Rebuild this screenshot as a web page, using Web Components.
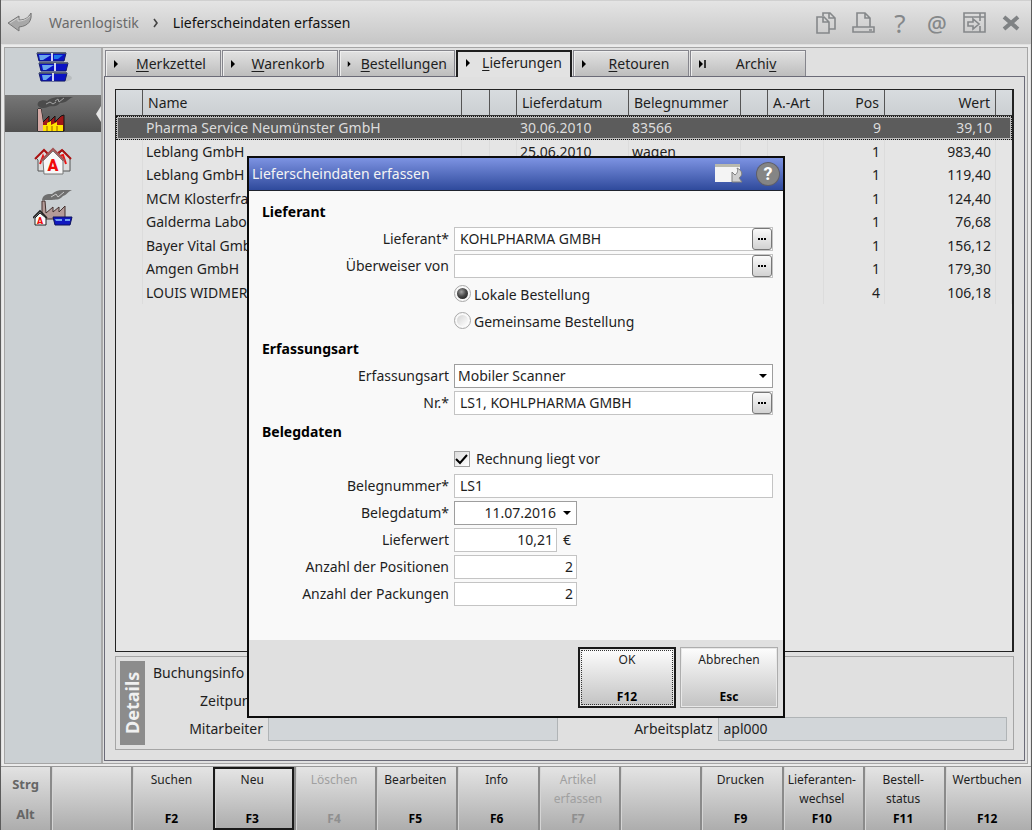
<!DOCTYPE html>
<html lang="de">
<head>
<meta charset="utf-8">
<title>Lieferscheindaten erfassen</title>
<style>
    html, body { margin: 0; height: 100%; }
    body {
        font: 14px/20px "Noto Sans", "Open Sans", sans-serif;
        color: #1e1e1e;
        background: #e0e0e0;
    }
</style>
</head>
<body>
<app-window>
    <title-bar slot="header" area="Warenlogistik" page="Lieferscheindaten erfassen"></title-bar>
    <side-nav slot="nav"></side-nav>
    <tab-strip slot="tabs">
        <tab-item before="" key="M" after="erkzettel"></tab-item>
        <tab-item before="" key="W" after="arenkorb"></tab-item>
        <tab-item before="" key="B" after="estellungen"></tab-item>
        <tab-item before="" key="L" after="ieferungen" active></tab-item>
        <tab-item before="" key="R" after="etouren"></tab-item>
        <tab-item before="Archi" key="v" after="" last></tab-item>
    </tab-strip>
    <delivery-table></delivery-table>
    <details-panel></details-panel>
    <function-bar slot="footer">
        <function-key></function-key>
        <function-key key="F2">Suchen</function-key>
        <function-key key="F3" current>Neu</function-key>
        <function-key key="F4" disabled>Löschen</function-key>
        <function-key key="F5">Bearbeiten</function-key>
        <function-key key="F6">Info</function-key>
        <function-key key="F7" disabled>Artikel<br>erfassen</function-key>
        <function-key></function-key>
        <function-key key="F9">Drucken</function-key>
        <function-key key="F10">Lieferanten-<br>wechsel</function-key>
        <function-key key="F11">Bestell-<br>status</function-key>
        <function-key key="F12">Wertbuchen</function-key>
    </function-bar>
    <modal-dialog slot="dialog" caption="Lieferscheindaten erfassen">
        <form-section caption="Lieferant">
            <form-field label="Lieferant*" type="lookup" value="KOHLPHARMA GMBH"></form-field>
            <form-field label="Überweiser von" type="lookup" value=""></form-field>
            <radio-choice name="bestellung" options="Lokale Bestellung|Gemeinsame Bestellung"></radio-choice>
        </form-section>
        <form-section caption="Erfassungsart">
            <form-field label="Erfassungsart" type="select" value="Mobiler Scanner"></form-field>
            <form-field label="Nr.*" type="lookup" value="LS1, KOHLPHARMA GMBH"></form-field>
        </form-section>
        <form-section caption="Belegdaten">
            <form-field text="Rechnung liegt vor" type="check"></form-field>
            <form-field label="Belegnummer*" type="text" value="LS1"></form-field>
            <form-field label="Belegdatum*" type="date" value="11.07.2016"></form-field>
            <form-field label="Lieferwert" type="amount" value="10,21"></form-field>
            <form-field label="Anzahl der Positionen" type="number" value="2"></form-field>
            <form-field label="Anzahl der Packungen" type="number" value="2"></form-field>
        </form-section>
        <dialog-button slot="actions" key="F12" current>OK</dialog-button>
        <dialog-button slot="actions" key="Esc">Abbrechen</dialog-button>
    </modal-dialog>
</app-window>

<script>
// shared by every element
const base = `
    *, *::before, *::after { box-sizing: border-box; }
    button, input, select { font: inherit; color: inherit; margin: 0; }
    svg { display: block; }
`;

class BaseElement extends HTMLElement {
    constructor() {
        super();
        this.shadow = this.attachShadow({ mode: 'open' });
    }
    connectedCallback() {
        this.shadow.innerHTML = `<style>${base}${this.getStyle()}</style>${this.getTemplate()}`;
    }
    attr(name) {
        return this.getAttribute(name) || '';
    }
}

customElements.define('app-window', class extends BaseElement {
    getStyle() {
        return `
            :host {
                position: relative;
                display: flex;
                flex-direction: column;
                min-height: 100vh;
                border: solid #5c5c5c;
                border-width: 0 1px;
                box-sizing: border-box;
            }
            .middle {
                flex: 1;
                display: grid;
                grid-template-columns: 98px minmax(0, 1fr);
                gap: 1px;
                margin: 3px 3px 2px;
                border: 1px solid #a5a5a5;
                outline: 2px solid #ebebeb;
            }
            main { display: flex; flex-direction: column; padding: 2px 2px 2px 0; }
            .page {
                flex: 1;
                display: flex;
                flex-direction: column;
                gap: 4px;
                padding: 12px 10px 10px;
                border: 1px solid #6b6b78;
                background: #e0e0e0;
            }
            ::slotted(delivery-table) { flex: 1; }
        `;
    }
    getTemplate() {
        return `
            <slot name="header"></slot>
            <div class="middle">
                <slot name="nav"></slot>
                <main>
                    <slot name="tabs"></slot>
                    <div class="page"><slot></slot></div>
                </main>
            </div>
            <slot name="footer"></slot>
            <slot name="dialog"></slot>
        `;
    }
});

customElements.define('title-bar', class extends BaseElement {
    getStyle() {
        return `
            :host {
                display: flex;
                align-items: center;
                height: 44px;
                padding: 0 8px 0 6px;
                background: linear-gradient(#e4e4e4, #c6c6c6);
                border-top: 1px solid #d0d0d0;
                box-sizing: border-box;
            }
            nav { display: flex; align-items: center; flex: 1; }
            a { margin-left: 16px; color: #6a6a6a; text-decoration: none; }
            .chevron { margin-left: 14px; }
            strong { margin-left: 13px; font-weight: normal; color: #111; }
            .tools { display: flex; align-items: center; gap: 13px; }
            button {
                display: flex;
                align-items: center;
                justify-content: center;
                width: 24px;
                height: 28px;
                padding: 0;
                border: 0;
                background: none;
                color: #85888a;
            }
            .back { width: 26px; }
            .help { font-size: 26px; }
            .mail { font-size: 22px; font-weight: 500; }
        `;
    }
    getTemplate() {
        return `
            <nav>
                <button class="back" aria-label="Zurück">
                    <svg width="26" height="22" viewBox="0 0 26 22">
                        <path d="M1 11 12 4v4c6 0 9-2 12-7 1 7-2 13-12 14v4z" fill="#a8a8a8" stroke="#777" />
                        <path d="M3 11 11 6v3c6 0 9-2 12-5" fill="none" stroke="#d0d0d0" />
                    </svg>
                </button>
                <a href="#">${this.attr('area')}</a>
                <svg class="chevron" width="7" height="12" viewBox="0 0 7 12"><path d="M1 2l3 4-3 4" fill="none" stroke="#444" stroke-width="1.6"/></svg>
                <strong>${this.attr('page')}</strong>
            </nav>
            <div class="tools">
                <button aria-label="Kopieren">
                    <svg width="20" height="22" viewBox="0 0 20 22" fill="none" stroke="#85888a" stroke-width="1.6">
                        <path d="M7 4V1h7l5 5v11h-6M13 1v5h6M1 5h7l5 5v11H1zM7 5v5h6"/>
                    </svg>
                </button>
                <button aria-label="Drucken">
                    <svg width="23" height="22" viewBox="0 0 23 22" fill="none" stroke="#85888a" stroke-width="1.6">
                        <path d="M5 15V1h8l5 5v9M13 1v5h5M1 15h21v5H1zM17 18h3"/>
                    </svg>
                </button>
                <button class="help" aria-label="Hilfe">?</button>
                <button class="mail" aria-label="Kontakt">@</button>
                <button aria-label="Fenster">
                    <svg width="23" height="21" viewBox="0 0 23 21" fill="none" stroke="#85888a" stroke-width="1.6">
                        <path d="M1 1h21v19H1zM1 5h21M17 1v8M17 14v6M5 10h5V7l6 5-6 5v-3H5z"/>
                    </svg>
                </button>
                <button aria-label="Schließen">
                    <svg width="18" height="16" viewBox="0 0 18 16"><path d="M2 2l14 12M16 2L2 14" stroke="#7f8284" stroke-width="4"/></svg>
                </button>
            </div>
        `;
    }
});

const icons = {
    crates: `
        <ellipse cx="29" cy="29" rx="10" ry="4" fill="#b9bdbf"/>
        <g fill="#0a12c4" stroke="#10186a" stroke-width="1">
            <path d="M4 4h29l-2 8H6zM6 14h29l-2 8H8zM6 24h28l-2 8H8z"/>
        </g>
        <path d="M6 6h12l-8 5H7zM9 16h12l-8 5h-3zM9 26h10l-6 5h-3z" fill="#6aa5ee"/>
        <path d="M21 6h9l-5 4h-4z" fill="#1f78e8"/>
        <path d="M4 4h29M6 14h29M6 24h28" stroke="#55606e" stroke-width="1.4"/>
        <path d="M19 4v8M22 14v8M20 24v8" stroke="#fff" stroke-width="1.6"/>`,
    factory: `
        <path d="M5 10c-2-5 5-7 9-5 5-5 14-4 26-4-5 2-6 6-13 6-4 5-9 2-12 4-4 2-8 1-10-1z" fill="#4b4b4b"/>
        <path d="M13 8l4-2 3 2 3-2M22 5l3-2 1 3 5-4" fill="none" stroke="#a5a5a5"/>
        <path d="M5 13h3l2 13 6-6v6l6-6v6l6-6 3-1v16H5z" fill="#a01717" stroke="#141414"/>
        <path d="M5 13h3l2 13v9H5z" fill="#d5a9a5"/>
        <path d="M10 29h4v-2l4-2v4l6-3v3h6v6H10z" fill="#ffe500"/>
        <path d="M14 30v5M19 30v5M24 30v5" stroke="#a05a00"/>`,
    houses: `
        <path d="M3 15l8-8 7 8v13H5V17z" fill="#ddd" stroke="#555"/>
        <path d="M22 15l8-8 7 8v13H23z" fill="#ddd" stroke="#555"/>
        <path d="M7 21l3-8 3 8M27 13l3-1 3 9" fill="none" stroke="#e11" stroke-width="2"/>
        <path d="M2 16l9-9 5 5M25 10l4-3 9 9" fill="none" stroke="#a11" stroke-width="2"/>
        <path d="M10 18L20 8l10 10v13H11z" fill="#f7f7f7" stroke="#777"/>
        <path d="M8 18L20 6l12 12" fill="none" stroke="#a35252" stroke-width="2"/>
        <text x="20" y="28" text-anchor="middle" font-family="Roboto, sans-serif" font-size="16" font-weight="900" fill="#f00a0a">A</text>`,
    combined: `
        <path d="M9 10c1-6 6-6 10-6 5-5 12-4 20-4-6 3-5 5-9 6-4 5-8 3-11 4z" fill="#6f6f6f"/>
        <path d="M18 7l5-3 2 3 6-5" fill="none" stroke="#ccc"/>
        <path d="M9 11h3l1 12 7-6v5l6-5v5l6-6v13H9z" fill="#b49b98" stroke="#44312f"/>
        <path d="M20 27h19l-2 8H22z" fill="#1018c0" stroke="#0c125c"/>
        <path d="M22 29h7v2h-6zM32 29h5v2h-5z" fill="#74a2ef"/>
        <path d="M2 28l5-5 6 5v7H2z" fill="#f8f8f8" stroke="#222"/>
        <path d="M0 28l7-7 7 7" fill="none" stroke="#222" stroke-width="1.6"/>
        <text x="7" y="34" text-anchor="middle" font-family="Roboto, sans-serif" font-size="9" font-weight="900" fill="#f00a0a">A</text>`
};

customElements.define('side-nav', class extends BaseElement {
    getStyle() {
        return `
            :host {
                display: flex;
                flex-direction: column;
                gap: 10px;
                background: #cbd0d3;
                border-right: 2px solid #a9a9a9;
            }
            button {
                display: flex;
                align-items: center;
                justify-content: center;
                height: 37px;
                padding: 0;
                border: 0;
                background: none;
            }
            button.active {
                position: relative;
                background: linear-gradient(#777, #505050);
            }
            button.active::after {
                content: "";
                position: absolute;
                top: 11px;
                right: 0;
                border: solid transparent;
                border-width: 8px 5px 8px 0;
                border-right-color: #e6e6e6;
            }
        `;
    }
    getTemplate() {
        return Object.keys(icons).map(name => `
            <button class="${name === 'factory' ? 'active' : ''}" aria-label="${name}">
                <svg width="40" height="36" viewBox="0 0 40 36">${icons[name]}</svg>
            </button>
        `).join('');
    }
});

customElements.define('tab-strip', class extends BaseElement {
    getStyle() {
        return `:host { display: flex; gap: 1px; height: 26px; padding-left: 1px; }`;
    }
    getTemplate() {
        return `<slot></slot>`;
    }
});

customElements.define('tab-item', class extends BaseElement {
    getStyle() {
        return `
            :host { display: block; width: 116px; }
            button {
                display: flex;
                align-items: center;
                width: 100%;
                height: 26px;
                padding: 0 7px;
                border: 1px solid #85858c;
                border-bottom: 0;
                background: linear-gradient(#e2e2e2, #bdbdbd);
                box-shadow: inset 1px 1px #eee;
            }
            span { flex: 1; text-align: center; padding-left: 7px; }
            :host([active]) button {
                position: relative;
                height: 27px;
                padding-bottom: 3px;
                border: 2px solid #1e1e1e;
                border-bottom: 0;
                background: #e2e2e2;
                box-shadow: none;
            }
            u { text-underline-offset: 2px; }
        `;
    }
    getTemplate() {
        const bar = this.hasAttribute('last') ? '<path d="M7 1v8" stroke="#000" stroke-width="1.5"/>' : '';
        return `
            <button>
                <svg width="9" height="10" viewBox="0 0 9 10"><path d="M1 1l4 4-4 4z"/>${bar}</svg>
                <span>${this.attr('before')}<u>${this.attr('key')}</u>${this.attr('after')}</span>
            </button>
        `;
    }
});

const columns = [
    { title: '', width: 27 },
    { title: 'Name', width: 0 },
    { title: '', width: 28 },
    { title: '', width: 27 },
    { title: 'Lieferdatum', width: 112 },
    { title: 'Belegnummer', width: 112 },
    { title: '', width: 27 },
    { title: 'A.-Art', width: 56 },
    { title: 'Pos', width: 61, right: true },
    { title: 'Wert', width: 111, right: true },
    { title: '', width: 16 }
];

const deliveries = [
    ['Pharma Service Neumünster GmbH', '30.06.2010', '83566', '9', '39,10'],
    ['Leblang GmbH', '25.06.2010', 'wagen', '1', '983,40'],
    ['Leblang GmbH', '', '', '1', '119,40'],
    ['MCM Klosterfrau', '', '', '1', '124,40'],
    ['Galderma Labor', '', '', '1', '76,68'],
    ['Bayer Vital GmbH', '', '', '1', '156,12'],
    ['Amgen GmbH', '', '', '1', '179,30'],
    ['LOUIS WIDMER', '', '', '4', '106,18']
];

customElements.define('delivery-table', class extends BaseElement {
    getStyle() {
        return `
            :host {
                display: block;
                border: 1px solid #222;
                border-right-width: 2px;
                background: #e5e5e5;
            }
            table { width: 100%; table-layout: fixed; border-collapse: separate; border-spacing: 0; }
            th {
                height: 26px;
                padding: 0 5px;
                border-right: 1px solid #555;
                border-bottom: 1px solid #333;
                background: linear-gradient(#d8dcdf, #cbcfd2);
                font-weight: normal;
                text-align: left;
                white-space: nowrap;
            }
            th:last-child { border-right: 0; }
            td {
                height: 23px;
                padding: 0 3px;
                border-right: 1px solid #dcdcdc;
                white-space: nowrap;
                overflow: hidden;
            }
            tr:nth-child(odd) td { height: 24px; }
            .right { text-align: right; }
            td.right { padding-right: 4px; }
            tr.selected { outline: 1px dotted #111; outline-offset: -1px; }
            tr.selected td {
                border: solid #bdbdbd;
                border-width: 2px 0;
                background: #5c5c5c;
                color: #dcdcdc;
                line-height: 18px;
            }
            tr.selected td:first-child { border-left: 2px solid #bdbdbd; }
            tr.selected td:last-child { border-right: 2px solid #bdbdbd; }
        `;
    }
    getRow([name, date, number, pos, value], index) {
        const cells = ['', name, '', '', date, number, '', '', pos, value, ''];
        return `
            <tr class="${index === 0 ? 'selected' : ''}">
                ${cells.map((cell, i) => `<td class="${columns[i].right ? 'right' : ''}">${cell}</td>`).join('')}
            </tr>
        `;
    }
    getTemplate() {
        return `
            <table>
                <colgroup>${columns.map(c => `<col${c.width ? ` style="width: ${c.width}px"` : ''}>`).join('')}</colgroup>
                <thead><tr>${columns.map(c => `<th class="${c.right ? 'right' : ''}">${c.title}</th>`).join('')}</tr></thead>
                <tbody>${deliveries.map(this.getRow).join('')}</tbody>
            </table>
        `;
    }
});

customElements.define('details-panel', class extends BaseElement {
    getStyle() {
        return `
            :host {
                display: flex;
                gap: 8px;
                padding: 4px 6px 4px 4px;
                border: 1px solid #a5a5a5;
            }
            h2 {
                width: 25px;
                min-height: 84px;
                margin: 0;
                background: #8c8c8c;
                color: #f0f0f0;
                font-size: 18px;
                line-height: 25px;
                text-align: center;
                writing-mode: vertical-rl;
                transform: rotate(180deg);
            }
            .fields {
                flex: 1;
                display: grid;
                grid-template-columns: 110px minmax(0, 1fr) 150px minmax(0, 1fr);
                grid-auto-rows: 24px;
                gap: 4px 5px;
                align-items: center;
            }
            label { text-align: right; white-space: nowrap; }
            label:first-child { text-align: left; }
            input {
                width: 100%;
                height: 24px;
                padding: 0 5px 2px;
                border: 1px solid #b0b4b6;
                background: #d2d6d9;
            }
            .short { grid-column-end: span 3; width: 290px; }
        `;
    }
    getTemplate() {
        return `
            <h2>Details</h2>
            <div class="fields">
                <label for="info">Buchungsinfo</label><input id="info" class="short" readonly>
                <label for="time">Zeitpunkt</label><input id="time" class="short" readonly>
                <label for="user">Mitarbeiter</label><input id="user" readonly>
                <label for="station">Arbeitsplatz</label><input id="station" value="apl000" readonly>
            </div>
        `;
    }
});

customElements.define('function-bar', class extends BaseElement {
    getStyle() {
        return `
            :host {
                display: grid;
                grid-template-columns: 49px repeat(11, minmax(0, 15fr)) minmax(0, 16fr);
                height: 64px;
                border-top: 1px solid #999;
                background: linear-gradient(#e2e2e2, #adadad);
                box-sizing: border-box;
            }
            .modifiers {
                display: flex;
                flex-direction: column;
                justify-content: space-between;
                padding: 7px 0 6px;
                color: #666;
                font-size: 13px;
                font-weight: bold;
                text-align: center;
            }
        `;
    }
    getTemplate() {
        return `<div class="modifiers"><span>Strg</span><span>Alt</span></div><slot></slot>`;
    }
});

class FunctionKey extends BaseElement {
    getStyle() {
        return `
            :host { display: block; }
            button {
                display: flex;
                flex-direction: column;
                align-items: center;
                justify-content: space-between;
                width: 100%;
                height: 63px;
                padding: 3px 3px 2px 0;
                border: 0;
                border-left: 2px solid #8a8a8a;
                background: linear-gradient(#e4e4e4, #adadad);
                box-shadow: inset 1px 0 #d5d5d5;
                font-size: 12px;
                line-height: 19px;
                white-space: nowrap;
            }
            :host([current]) button {
                border: 2px solid #1a1a1a;
                padding: 1px 2px 0 0;
            }
            :host([disabled]) button { color: #a0a0a0; }
            :host([disabled]) strong { color: #8f8f8f; }
            strong { color: #000; }
        `;
    }
    getTemplate() {
        const disabled = this.hasAttribute('disabled') ? 'disabled' : '';
        return `<button ${disabled}><span><slot></slot></span><strong>${this.attr('key')}</strong></button>`;
    }
}
customElements.define('function-key', FunctionKey);

customElements.define('dialog-button', class extends FunctionKey {
    getStyle() {
        return `
            ${super.getStyle()}
            :host { width: 98px; }
            button {
                height: 61px;
                padding: 2px 0 1px;
                border: 1px solid #adadad;
                background: linear-gradient(#fdfdfd, #c2c2c2);
                box-shadow: inset 0 0 0 1px #e8e8e8;
            }
            :host([current]) button {
                padding: 1px 0 0;
                outline: 1px dotted #333;
                outline-offset: -4px;
            }
        `;
    }
});

customElements.define('modal-dialog', class extends BaseElement {
    getStyle() {
        return `
            :host {
                position: absolute;
                top: 156px;
                left: 0;
                right: 0;
                width: 538px;
                margin: 0 auto;
                border: 2px solid #0c0c0c;
                box-sizing: border-box;
                background: #f9f9f9;
            }
            header {
                display: flex;
                align-items: center;
                gap: 14px;
                height: 33px;
                padding: 0 4px 0 3px;
                border-bottom: 1px solid #20242e;
                background: linear-gradient(#7d93e2, #2f4a9c);
                color: #f4f4f4;
            }
            h1 { flex: 1; margin: 0; font-size: 14px; font-weight: normal; }
            header button { padding: 0; border: 0; background: none; }
            header .help {
                width: 22px;
                height: 22px;
                border-radius: 50%;
                background: #858585;
                box-shadow: 0 0 0 1px #5f5f6a;
                color: #fff;
                font: bold 18px/22px Roboto, sans-serif;
            }
            .body {
                display: flex;
                flex-direction: column;
                gap: 5px;
                padding: 9px 10px 34px 13px;
            }
            footer {
                display: flex;
                justify-content: flex-end;
                gap: 4px;
                padding: 7px 5px 8px;
                background: #e0e0e0;
            }
        `;
    }
    getTemplate() {
        return `
            <header>
                <h1>${this.attr('caption')}</h1>
                <button aria-label="Andocken">
                    <svg width="28" height="22" viewBox="0 0 28 22">
                        <path d="M0 1h25v18H0z" fill="#f4f4f4"/>
                        <path d="M0 1h25v3H0z" fill="#b9b9ad"/>
                        <path d="M17 9l3 3c3-2 3-5 2-7 6 3 6 7 2 10l3 4H17z" fill="#cfcfcf" stroke="#808080"/>
                    </svg>
                </button>
                <button class="help" aria-label="Hilfe">?</button>
            </header>
            <div class="body"><slot></slot></div>
            <footer><slot name="actions"></slot></footer>
        `;
    }
});

customElements.define('form-section', class extends BaseElement {
    getStyle() {
        return `
            :host { display: flex; flex-direction: column; gap: 3px; }
            h2 { height: 24px; margin: 0; color: #000; font-size: 14px; line-height: 24px; }
        `;
    }
    getTemplate() {
        return `<h2>${this.attr('caption')}</h2><slot></slot>`;
    }
});

const formRow = `
    :host {
        display: grid;
        grid-template-columns: 187px minmax(0, 1fr);
        column-gap: 5px;
        min-height: 24px;
        align-items: center;
    }
`;

customElements.define('radio-choice', class extends BaseElement {
    getStyle() {
        return `
            ${formRow}
            :host { row-gap: 3px; }
            label { grid-column: 2; display: flex; align-items: flex-end; gap: 3px; height: 24px; line-height: 21px; }
            input {
                display: grid;
                place-items: center;
                appearance: none;
                width: 17px;
                height: 17px;
                margin-bottom: 3px;
                border: 1px solid #a8a8a8;
                border-radius: 50%;
                background: #f9f9f9;
            }
            input::before {
                content: "";
                width: 11px;
                height: 11px;
                border-radius: 50%;
                background: linear-gradient(135deg, #d4d4d4, #fff);
            }
            input:checked::before { background: radial-gradient(circle at 40% 35%, #a5a5a5, #4a4a4a 45%, #111); }
        `;
    }
    getTemplate() {
        return this.attr('options').split('|').map((option, i) => `
            <label><input type="radio" name="${this.attr('name')}" ${i === 0 ? 'checked' : ''}>${option}</label>
        `).join('');
    }
});

customElements.define('form-field', class extends BaseElement {
    getStyle() {
        return `
            ${formRow}
            .label { text-align: right; }
            .box {
                display: flex;
                align-items: center;
                height: 24px;
                border: 1px solid #c4c4c4;
                background: #fff;
            }
            .box input, .box select {
                flex: 1;
                min-width: 0;
                height: 22px;
                padding: 0 5px 2px;
                border: 0;
                background: none;
                outline: 0;
            }
            .more {
                width: 20px;
                height: 22px;
                padding: 0 4px;
                border: 1px solid #777;
                border-radius: 3px;
                background: linear-gradient(#fafafa, #d2d2d2);
            }
            .select, .date { border-color: #9e9e9e; }
            .select { display: grid; grid-template-columns: minmax(0, 1fr) 18px; }
            .select select { grid-area: 1 / 1 / 2 / 3; appearance: none; padding: 0 3px; }
            .select svg { grid-area: 1 / 2; justify-self: center; pointer-events: none; }
            .date, .number { width: 123px; }
            .date input, .number input, .amount input { text-align: right; padding: 0 3px 2px; }
            .amount { width: 103px; }
            .arrow { width: 17px; padding: 0 4px; border: 0; background: none; }
            .line { display: flex; align-items: center; gap: 6px; }
            .check { grid-column: 2; display: flex; align-items: center; gap: 6px; }
            .tick { display: grid; }
            .tick > * { grid-area: 1 / 1; }
            .tick input {
                appearance: none;
                width: 16px;
                height: 16px;
                border: 1px solid #a0a0a0;
                background: linear-gradient(135deg, #ddd, #fff);
            }
            .tick svg { pointer-events: none; }
        `;
    }
    getControl() {
        const input = `<input id="control" value="${this.attr('value')}">`;
        const arrow = `<svg width="8" height="4" viewBox="0 0 8 4"><path d="M0 0h8L4 4z"/></svg>`;
        const controls = {
            text: () => `<div class="box">${input}</div>`,
            number: () => `<div class="box number">${input}</div>`,
            amount: () => `<div class="line"><div class="box amount">${input}</div>€</div>`,
            date: () => `<div class="box date">${input}<button class="arrow" aria-label="Kalender">${arrow}</button></div>`,
            select: () => `<div class="box select"><select id="control"><option>${this.attr('value')}</option></select>${arrow}</div>`,
            lookup: () => `
                <div class="box">${input}
                    <button class="more" aria-label="Auswählen">
                        <svg width="10" height="2" viewBox="0 0 10 2"><path d="M1 0h2v2H1zM4 0h2v2H4zM7 0h2v2H7z"/></svg>
                    </button>
                </div>`
        };
        return controls[this.attr('type')]();
    }
    getTemplate() {
        if (this.attr('type') === 'check') {
            return `
                <label class="check">
                    <span class="tick">
                        <input type="checkbox" checked>
                        <svg width="16" height="16" viewBox="0 0 16 16"><path d="M2 8l4 4 7-8" fill="none" stroke="#000" stroke-width="2"/></svg>
                    </span>
                    ${this.attr('text')}
                </label>
            `;
        }
        return `<label class="label" for="control">${this.attr('label')}</label>${this.getControl()}`;
    }
});
</script>
</body>
</html>
